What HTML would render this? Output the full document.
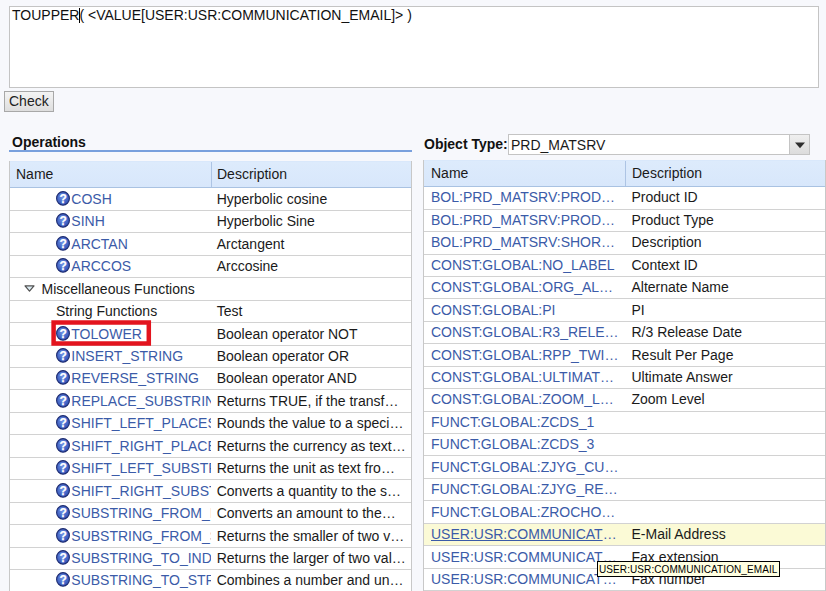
<!DOCTYPE html>
<html><head><meta charset="utf-8">
<style>
html,body{margin:0;padding:0;}
body{width:826px;height:591px;overflow:hidden;position:relative;background:#f7f8fc;font-family:"Liberation Sans",sans-serif;font-size:14px;color:#1a1a1a;}
.abs{position:absolute;}
.t{position:absolute;white-space:nowrap;line-height:16px;}
.lnk{color:#3b5ba8;}
.u{text-decoration:underline;}
.ic{position:absolute;}
.hl1{position:absolute;height:1px;background:#d2d2d2;}
#ta{position:absolute;left:9px;top:6px;width:808px;height:80px;background:#fff;border:1px solid #c4c4c4;}
#caret{position:absolute;left:79px;top:8px;width:1px;height:15px;background:#000;}
#btn{position:absolute;left:4px;top:91px;width:48px;height:19px;border:1px solid #a8a8a8;background:linear-gradient(#f4f4f4,#dedede);}
#opsline{position:absolute;left:9px;top:150px;width:403px;height:2px;background:#79a0dd;}
.tbl{position:absolute;background:#fff;border-left:1px solid #c8c8c8;border-right:1px solid #c8c8c8;}
.hdr{position:absolute;height:25px;background:linear-gradient(#ddebfc,#d8e7fb);border-top:1px solid #d9e8fb;border-bottom:1px solid #a9c2e2;}
.sep{position:absolute;width:1px;background:#adc4e4;}
#red{position:absolute;left:51px;top:320px;width:92px;height:18px;border:4px solid #e3141e;}
#dd{position:absolute;left:508px;top:134px;width:281px;height:19px;background:#fff;border:1px solid #c4c4c4;}
#ddb{position:absolute;left:789px;top:134px;width:19px;height:19px;background:linear-gradient(#efefef,#dcdcdc);border:1px solid #c4c4c4;}
#ddb i{position:absolute;left:5px;top:8px;width:0;height:0;border-left:5px solid transparent;border-right:5px solid transparent;border-top:6px solid #333;}
#tip{position:absolute;left:597px;top:561px;width:181px;height:14px;border:1px solid #000;background:#ffffe1;}
</style></head><body>
<div id="ta"></div>
<div class="t" style="left:12px;top:7px;color:#111">TOUPPER( &lt;VALUE[USER:USR:COMMUNICATION_EMAIL]&gt; )</div>
<div id="caret"></div>
<div id="btn"></div>
<div class="t" style="left:9px;top:93px;color:#222">Check</div>
<div class="t" style="left:12px;top:134px;font-weight:bold;color:#111">Operations</div>
<div id="opsline"></div>

<div class="tbl" style="left:9px;top:161px;width:401px;height:430px"></div>
<div class="hdr" style="left:10px;top:161px;width:401px"></div>
<div class="sep" style="left:211px;top:162px;height:25px"></div>
<div class="t" style="left:16px;top:166px;">Name</div>
<div class="t" style="left:217px;top:166px;">Description</div>
<div class="hl1" style="left:10px;top:210px;width:401px"></div>
<div class="hl1" style="left:10px;top:232px;width:401px"></div>
<div class="hl1" style="left:10px;top:255px;width:401px"></div>
<div class="hl1" style="left:10px;top:277px;width:401px"></div>
<div class="hl1" style="left:10px;top:300px;width:401px"></div>
<div class="hl1" style="left:10px;top:322px;width:401px"></div>
<div class="hl1" style="left:10px;top:345px;width:401px"></div>
<div class="hl1" style="left:10px;top:367px;width:401px"></div>
<div class="hl1" style="left:10px;top:389px;width:401px"></div>
<div class="hl1" style="left:10px;top:412px;width:401px"></div>
<div class="hl1" style="left:10px;top:434px;width:401px"></div>
<div class="hl1" style="left:10px;top:457px;width:401px"></div>
<div class="hl1" style="left:10px;top:479px;width:401px"></div>
<div class="hl1" style="left:10px;top:502px;width:401px"></div>
<div class="hl1" style="left:10px;top:524px;width:401px"></div>
<div class="hl1" style="left:10px;top:547px;width:401px"></div>
<div class="hl1" style="left:10px;top:569px;width:401px"></div>
<div class="hl1" style="left:10px;top:591px;width:401px"></div>
<div class="t" style="left:216.7px;top:191px;">Hyperbolic cosine</div>
<div class="t" style="left:216.7px;top:213px;">Hyperbolic Sine</div>
<div class="t" style="left:216.7px;top:236px;">Arctangent</div>
<div class="t" style="left:216.7px;top:258px;">Arccosine</div>
<svg class="abs" style="left:23.6px;top:285px" width="11" height="8" viewBox="0 0 11 8"><polygon points="1,0.9 10,0.9 5.5,6.1" fill="#dcebf2" stroke="#505050" stroke-width="1.2" stroke-linejoin="round"/></svg>
<div class="t" style="left:41.5px;top:281px;">Miscellaneous Functions</div>
<div class="t" style="left:216.7px;top:303px;">Test</div>
<div class="t" style="left:216.7px;top:326px;">Boolean operator NOT</div>
<div class="t" style="left:216.7px;top:348px;">Boolean operator OR</div>
<div class="t" style="left:216.7px;top:370px;">Boolean operator AND</div>
<div class="t" style="left:216.7px;top:393px;">Returns TRUE, if the transf…</div>
<div class="t" style="left:216.7px;top:415px;">Rounds the value to a speci…</div>
<div class="t" style="left:216.7px;top:438px;">Returns the currency as text…</div>
<div class="t" style="left:216.7px;top:460px;">Returns the unit as text fro…</div>
<div class="t" style="left:216.7px;top:483px;">Converts a quantity to the s…</div>
<div class="t" style="left:216.7px;top:505px;">Converts an amount to the…</div>
<div class="t" style="left:216.7px;top:528px;">Returns the smaller of two v…</div>
<div class="t" style="left:216.7px;top:550px;">Returns the larger of two val…</div>
<div class="t" style="left:216.7px;top:572px;">Combines a number and un…</div>
<div class="abs" style="left:10px;top:187px;width:201px;height:404px;overflow:hidden"><svg class="ic" style="left:46px;top:4px" width="15" height="16" viewBox="0 0 15 16"><defs><radialGradient id="g0" cx="45%" cy="40%" r="60%"><stop offset="0" stop-color="#6f93e6"/><stop offset="1" stop-color="#2f4fb4"/></radialGradient></defs><ellipse cx="7" cy="7.4" rx="6.4" ry="6.8" fill="url(#g0)" stroke="#1e2c70" stroke-width="1.1"/><text x="7.1" y="11.5" text-anchor="middle" font-family="Liberation Sans" font-weight="bold" font-size="12" fill="#fff" stroke="#fff" stroke-width="0.25">?</text></svg><div class="t lnk" style="left:61.3px;top:4px;">COSH</div><svg class="ic" style="left:46px;top:26px" width="15" height="16" viewBox="0 0 15 16"><defs><radialGradient id="g1" cx="45%" cy="40%" r="60%"><stop offset="0" stop-color="#6f93e6"/><stop offset="1" stop-color="#2f4fb4"/></radialGradient></defs><ellipse cx="7" cy="7.4" rx="6.4" ry="6.8" fill="url(#g1)" stroke="#1e2c70" stroke-width="1.1"/><text x="7.1" y="11.5" text-anchor="middle" font-family="Liberation Sans" font-weight="bold" font-size="12" fill="#fff" stroke="#fff" stroke-width="0.25">?</text></svg><div class="t lnk" style="left:61.3px;top:26px;">SINH</div><svg class="ic" style="left:46px;top:49px" width="15" height="16" viewBox="0 0 15 16"><defs><radialGradient id="g2" cx="45%" cy="40%" r="60%"><stop offset="0" stop-color="#6f93e6"/><stop offset="1" stop-color="#2f4fb4"/></radialGradient></defs><ellipse cx="7" cy="7.4" rx="6.4" ry="6.8" fill="url(#g2)" stroke="#1e2c70" stroke-width="1.1"/><text x="7.1" y="11.5" text-anchor="middle" font-family="Liberation Sans" font-weight="bold" font-size="12" fill="#fff" stroke="#fff" stroke-width="0.25">?</text></svg><div class="t lnk" style="left:61.3px;top:49px;">ARCTAN</div><svg class="ic" style="left:46px;top:71px" width="15" height="16" viewBox="0 0 15 16"><defs><radialGradient id="g3" cx="45%" cy="40%" r="60%"><stop offset="0" stop-color="#6f93e6"/><stop offset="1" stop-color="#2f4fb4"/></radialGradient></defs><ellipse cx="7" cy="7.4" rx="6.4" ry="6.8" fill="url(#g3)" stroke="#1e2c70" stroke-width="1.1"/><text x="7.1" y="11.5" text-anchor="middle" font-family="Liberation Sans" font-weight="bold" font-size="12" fill="#fff" stroke="#fff" stroke-width="0.25">?</text></svg><div class="t lnk" style="left:61.3px;top:71px;">ARCCOS</div><div class="t" style="left:46px;top:116px;">String Functions</div><svg class="ic" style="left:46px;top:139px" width="15" height="16" viewBox="0 0 15 16"><defs><radialGradient id="g6" cx="45%" cy="40%" r="60%"><stop offset="0" stop-color="#6f93e6"/><stop offset="1" stop-color="#2f4fb4"/></radialGradient></defs><ellipse cx="7" cy="7.4" rx="6.4" ry="6.8" fill="url(#g6)" stroke="#1e2c70" stroke-width="1.1"/><text x="7.1" y="11.5" text-anchor="middle" font-family="Liberation Sans" font-weight="bold" font-size="12" fill="#fff" stroke="#fff" stroke-width="0.25">?</text></svg><div class="t lnk" style="left:61.3px;top:139px;">TOLOWER</div><svg class="ic" style="left:46px;top:161px" width="15" height="16" viewBox="0 0 15 16"><defs><radialGradient id="g7" cx="45%" cy="40%" r="60%"><stop offset="0" stop-color="#6f93e6"/><stop offset="1" stop-color="#2f4fb4"/></radialGradient></defs><ellipse cx="7" cy="7.4" rx="6.4" ry="6.8" fill="url(#g7)" stroke="#1e2c70" stroke-width="1.1"/><text x="7.1" y="11.5" text-anchor="middle" font-family="Liberation Sans" font-weight="bold" font-size="12" fill="#fff" stroke="#fff" stroke-width="0.25">?</text></svg><div class="t lnk" style="left:61.3px;top:161px;">INSERT_STRING</div><svg class="ic" style="left:46px;top:183px" width="15" height="16" viewBox="0 0 15 16"><defs><radialGradient id="g8" cx="45%" cy="40%" r="60%"><stop offset="0" stop-color="#6f93e6"/><stop offset="1" stop-color="#2f4fb4"/></radialGradient></defs><ellipse cx="7" cy="7.4" rx="6.4" ry="6.8" fill="url(#g8)" stroke="#1e2c70" stroke-width="1.1"/><text x="7.1" y="11.5" text-anchor="middle" font-family="Liberation Sans" font-weight="bold" font-size="12" fill="#fff" stroke="#fff" stroke-width="0.25">?</text></svg><div class="t lnk" style="left:61.3px;top:183px;">REVERSE_STRING</div><svg class="ic" style="left:46px;top:206px" width="15" height="16" viewBox="0 0 15 16"><defs><radialGradient id="g9" cx="45%" cy="40%" r="60%"><stop offset="0" stop-color="#6f93e6"/><stop offset="1" stop-color="#2f4fb4"/></radialGradient></defs><ellipse cx="7" cy="7.4" rx="6.4" ry="6.8" fill="url(#g9)" stroke="#1e2c70" stroke-width="1.1"/><text x="7.1" y="11.5" text-anchor="middle" font-family="Liberation Sans" font-weight="bold" font-size="12" fill="#fff" stroke="#fff" stroke-width="0.25">?</text></svg><div class="t lnk" style="left:61.3px;top:206px;">REPLACE_SUBSTRING</div><svg class="ic" style="left:46px;top:228px" width="15" height="16" viewBox="0 0 15 16"><defs><radialGradient id="g10" cx="45%" cy="40%" r="60%"><stop offset="0" stop-color="#6f93e6"/><stop offset="1" stop-color="#2f4fb4"/></radialGradient></defs><ellipse cx="7" cy="7.4" rx="6.4" ry="6.8" fill="url(#g10)" stroke="#1e2c70" stroke-width="1.1"/><text x="7.1" y="11.5" text-anchor="middle" font-family="Liberation Sans" font-weight="bold" font-size="12" fill="#fff" stroke="#fff" stroke-width="0.25">?</text></svg><div class="t lnk" style="left:61.3px;top:228px;">SHIFT_LEFT_PLACES</div><svg class="ic" style="left:46px;top:251px" width="15" height="16" viewBox="0 0 15 16"><defs><radialGradient id="g11" cx="45%" cy="40%" r="60%"><stop offset="0" stop-color="#6f93e6"/><stop offset="1" stop-color="#2f4fb4"/></radialGradient></defs><ellipse cx="7" cy="7.4" rx="6.4" ry="6.8" fill="url(#g11)" stroke="#1e2c70" stroke-width="1.1"/><text x="7.1" y="11.5" text-anchor="middle" font-family="Liberation Sans" font-weight="bold" font-size="12" fill="#fff" stroke="#fff" stroke-width="0.25">?</text></svg><div class="t lnk" style="left:61.3px;top:251px;">SHIFT_RIGHT_PLACES</div><svg class="ic" style="left:46px;top:273px" width="15" height="16" viewBox="0 0 15 16"><defs><radialGradient id="g12" cx="45%" cy="40%" r="60%"><stop offset="0" stop-color="#6f93e6"/><stop offset="1" stop-color="#2f4fb4"/></radialGradient></defs><ellipse cx="7" cy="7.4" rx="6.4" ry="6.8" fill="url(#g12)" stroke="#1e2c70" stroke-width="1.1"/><text x="7.1" y="11.5" text-anchor="middle" font-family="Liberation Sans" font-weight="bold" font-size="12" fill="#fff" stroke="#fff" stroke-width="0.25">?</text></svg><div class="t lnk" style="left:61.3px;top:273px;">SHIFT_LEFT_SUBSTRING</div><svg class="ic" style="left:46px;top:296px" width="15" height="16" viewBox="0 0 15 16"><defs><radialGradient id="g13" cx="45%" cy="40%" r="60%"><stop offset="0" stop-color="#6f93e6"/><stop offset="1" stop-color="#2f4fb4"/></radialGradient></defs><ellipse cx="7" cy="7.4" rx="6.4" ry="6.8" fill="url(#g13)" stroke="#1e2c70" stroke-width="1.1"/><text x="7.1" y="11.5" text-anchor="middle" font-family="Liberation Sans" font-weight="bold" font-size="12" fill="#fff" stroke="#fff" stroke-width="0.25">?</text></svg><div class="t lnk" style="left:61.3px;top:296px;">SHIFT_RIGHT_SUBSTRING</div><svg class="ic" style="left:46px;top:318px" width="15" height="16" viewBox="0 0 15 16"><defs><radialGradient id="g14" cx="45%" cy="40%" r="60%"><stop offset="0" stop-color="#6f93e6"/><stop offset="1" stop-color="#2f4fb4"/></radialGradient></defs><ellipse cx="7" cy="7.4" rx="6.4" ry="6.8" fill="url(#g14)" stroke="#1e2c70" stroke-width="1.1"/><text x="7.1" y="11.5" text-anchor="middle" font-family="Liberation Sans" font-weight="bold" font-size="12" fill="#fff" stroke="#fff" stroke-width="0.25">?</text></svg><div class="t lnk" style="left:61.3px;top:318px;">SUBSTRING_FROM_INDEX</div><svg class="ic" style="left:46px;top:341px" width="15" height="16" viewBox="0 0 15 16"><defs><radialGradient id="g15" cx="45%" cy="40%" r="60%"><stop offset="0" stop-color="#6f93e6"/><stop offset="1" stop-color="#2f4fb4"/></radialGradient></defs><ellipse cx="7" cy="7.4" rx="6.4" ry="6.8" fill="url(#g15)" stroke="#1e2c70" stroke-width="1.1"/><text x="7.1" y="11.5" text-anchor="middle" font-family="Liberation Sans" font-weight="bold" font-size="12" fill="#fff" stroke="#fff" stroke-width="0.25">?</text></svg><div class="t lnk" style="left:61.3px;top:341px;">SUBSTRING_FROM_STRING</div><svg class="ic" style="left:46px;top:363px" width="15" height="16" viewBox="0 0 15 16"><defs><radialGradient id="g16" cx="45%" cy="40%" r="60%"><stop offset="0" stop-color="#6f93e6"/><stop offset="1" stop-color="#2f4fb4"/></radialGradient></defs><ellipse cx="7" cy="7.4" rx="6.4" ry="6.8" fill="url(#g16)" stroke="#1e2c70" stroke-width="1.1"/><text x="7.1" y="11.5" text-anchor="middle" font-family="Liberation Sans" font-weight="bold" font-size="12" fill="#fff" stroke="#fff" stroke-width="0.25">?</text></svg><div class="t lnk" style="left:61.3px;top:363px;">SUBSTRING_TO_INDEX</div><svg class="ic" style="left:46px;top:385px" width="15" height="16" viewBox="0 0 15 16"><defs><radialGradient id="g17" cx="45%" cy="40%" r="60%"><stop offset="0" stop-color="#6f93e6"/><stop offset="1" stop-color="#2f4fb4"/></radialGradient></defs><ellipse cx="7" cy="7.4" rx="6.4" ry="6.8" fill="url(#g17)" stroke="#1e2c70" stroke-width="1.1"/><text x="7.1" y="11.5" text-anchor="middle" font-family="Liberation Sans" font-weight="bold" font-size="12" fill="#fff" stroke="#fff" stroke-width="0.25">?</text></svg><div class="t lnk" style="left:61.3px;top:385px;">SUBSTRING_TO_STRING</div></div>

<div class="tbl" style="left:423px;top:160px;width:401px;height:431px"></div>
<div class="hdr" style="left:424px;top:160px;width:401px"></div>
<div class="sep" style="left:625px;top:161px;height:25px"></div>
<div class="t" style="left:431px;top:165px;">Name</div>
<div class="t" style="left:632px;top:165px;">Description</div>
<div class="abs" style="left:424px;top:524px;width:401px;height:21px;background:#fbfad6"></div>
<div class="hl1" style="left:424px;top:209px;width:401px"></div>
<div class="hl1" style="left:424px;top:231px;width:401px"></div>
<div class="hl1" style="left:424px;top:254px;width:401px"></div>
<div class="hl1" style="left:424px;top:276px;width:401px"></div>
<div class="hl1" style="left:424px;top:298px;width:401px"></div>
<div class="hl1" style="left:424px;top:321px;width:401px"></div>
<div class="hl1" style="left:424px;top:343px;width:401px"></div>
<div class="hl1" style="left:424px;top:366px;width:401px"></div>
<div class="hl1" style="left:424px;top:388px;width:401px"></div>
<div class="hl1" style="left:424px;top:411px;width:401px"></div>
<div class="hl1" style="left:424px;top:433px;width:401px"></div>
<div class="hl1" style="left:424px;top:455px;width:401px"></div>
<div class="hl1" style="left:424px;top:478px;width:401px"></div>
<div class="hl1" style="left:424px;top:500px;width:401px"></div>
<div class="hl1" style="left:424px;top:523px;width:401px"></div>
<div class="hl1" style="left:424px;top:545px;width:401px"></div>
<div class="hl1" style="left:424px;top:568px;width:401px"></div>
<div class="hl1" style="left:424px;top:590px;width:401px"></div>
<div class="t lnk" style="left:431px;top:189px;">BOL:PRD_MATSRV:PROD…</div>
<div class="t" style="left:631.5px;top:189px;">Product ID</div>
<div class="t lnk" style="left:431px;top:212px;">BOL:PRD_MATSRV:PROD…</div>
<div class="t" style="left:631.5px;top:212px;">Product Type</div>
<div class="t lnk" style="left:431px;top:234px;">BOL:PRD_MATSRV:SHOR…</div>
<div class="t" style="left:631.5px;top:234px;">Description</div>
<div class="t lnk" style="left:431px;top:257px;">CONST:GLOBAL:NO_LABEL</div>
<div class="t" style="left:631.5px;top:257px;">Context ID</div>
<div class="t lnk" style="left:431px;top:279px;">CONST:GLOBAL:ORG_AL…</div>
<div class="t" style="left:631.5px;top:279px;">Alternate Name</div>
<div class="t lnk" style="left:431px;top:302px;">CONST:GLOBAL:PI</div>
<div class="t" style="left:631.5px;top:302px;">PI</div>
<div class="t lnk" style="left:431px;top:324px;">CONST:GLOBAL:R3_RELE…</div>
<div class="t" style="left:631.5px;top:324px;">R/3 Release Date</div>
<div class="t lnk" style="left:431px;top:347px;">CONST:GLOBAL:RPP_TWI…</div>
<div class="t" style="left:631.5px;top:347px;">Result Per Page</div>
<div class="t lnk" style="left:431px;top:369px;">CONST:GLOBAL:ULTIMAT…</div>
<div class="t" style="left:631.5px;top:369px;">Ultimate Answer</div>
<div class="t lnk" style="left:431px;top:391px;">CONST:GLOBAL:ZOOM_L…</div>
<div class="t" style="left:631.5px;top:391px;">Zoom Level</div>
<div class="t lnk" style="left:431px;top:414px;">FUNCT:GLOBAL:ZCDS_1</div>
<div class="t lnk" style="left:431px;top:436px;">FUNCT:GLOBAL:ZCDS_3</div>
<div class="t lnk" style="left:431px;top:459px;">FUNCT:GLOBAL:ZJYG_CU…</div>
<div class="t lnk" style="left:431px;top:481px;">FUNCT:GLOBAL:ZJYG_RE…</div>
<div class="t lnk" style="left:431px;top:504px;">FUNCT:GLOBAL:ZROCHO…</div>
<div class="t lnk" style="left:431px;top:526px;"><span class="u">USER:USR:COMMUNICAT</span>…</div>
<div class="t" style="left:631.5px;top:526px;">E-Mail Address</div>
<div class="t lnk" style="left:431px;top:549px;">USER:USR:COMMUNICAT…</div>
<div class="t" style="left:631.5px;top:549px;">Fax extension</div>
<div class="t lnk" style="left:431px;top:571px;">USER:USR:COMMUNICAT…</div>
<div class="t" style="left:631.5px;top:571px;">Fax number</div>

<svg class="abs" style="left:0;top:0" width="826" height="591"><rect x="53.6" y="322.5" width="95.2" height="21" fill="none" stroke="#e3141e" stroke-width="4.5"/></svg>
<div class="t" style="left:424px;top:136px;font-weight:bold;color:#111">Object Type:</div>
<div id="dd"></div>
<div class="t" style="left:511px;top:137px;">PRD_MATSRV</div>
<div id="ddb"></div><svg class="abs" style="left:790px;top:135px" width="19" height="19"><polygon points="5,7.5 15,7.5 10,13.2" fill="#2e2e2e"/></svg>
<div id="tip"></div>
<div class="t" style="left:599px;top:562px;font-size:10px;letter-spacing:0.09px;line-height:13px;color:#000;transform:scaleY(1.08);transform-origin:0 0">USER:USR:COMMUNICATION_EMAIL</div>
</body></html>
